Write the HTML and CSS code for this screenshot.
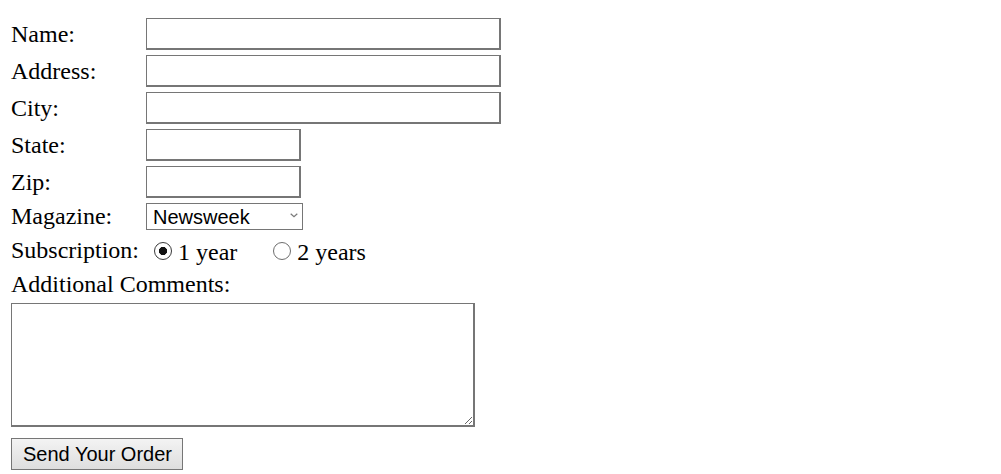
FILE: index.html
```html
<!DOCTYPE html>
<html>
<head>
<meta charset="utf-8">
<link rel="stylesheet" href="styles.css">
</head>
<body>
<form class="order">
  <div class="row"><span class="label">Name:</span><input class="text long" type="text"></div>
  <div class="row"><span class="label">Address:</span><input class="text long" type="text"></div>
  <div class="row"><span class="label">City:</span><input class="text long" type="text"></div>
  <div class="row"><span class="label">State:</span><input class="text short" type="text"></div>
  <div class="row"><span class="label">Zip:</span><input class="text short" type="text"></div>
  <div class="row row-select"><span class="label">Magazine:</span>
    <div class="select-wrap">
      <select class="mag"><option>Newsweek</option><option>Time</option></select>
      <svg class="chev" width="8" height="5" viewBox="0 0 8 5"><path d="M0.7 0.7 L4 3.8 L7.3 0.7" fill="none" stroke="#7a7a7a" stroke-width="1.2"/></svg>
    </div>
  </div>
  <div class="row row-radio"><span class="label">Subscription:</span>
    <div class="options">
      <label class="opt"><input class="radio" type="radio" name="sub" checked><span>1 year</span></label>
      <label class="opt"><input class="radio" type="radio" name="sub"><span>2 years</span></label>
    </div>
  </div>
  <div class="comments-label">Additional Comments:</div>
  <textarea class="comments"></textarea>
  <button class="send" type="button">Send Your Order</button>
</form>
</body>
</html>
```

FILE: styles.css
```css
html, body {
  margin: 0;
  padding: 0;
  background: #ffffff;
}

.order {
  display: flex;
  flex-direction: column;
  align-items: flex-start;
  padding: 18px 0 0 11px;
  font-family: "Liberation Serif", "Times New Roman", serif;
  font-size: 24px;
  color: #000;
}

.row {
  display: flex;
  align-items: center;
  height: 32px;
  margin-bottom: 5px;
}

.label {
  width: 135px;
  flex: none;
}

.text {
  box-sizing: border-box;
  height: 32px;
  margin: 0;
  padding: 0 3px;
  border-style: solid;
  border-color: #767676;
  border-width: 1px 2px 2px 1px;
  background: #fff;
  font-family: "Liberation Sans", Arial, sans-serif;
  font-size: 20px;
  outline: none;
}

.long { width: 355px; }
.short { width: 155px; }

.row-select {
  height: 27px;
  margin-bottom: 3px;
}

.select-wrap {
  position: relative;
  display: flex;
}

.mag {
  appearance: none;
  -webkit-appearance: none;
  box-sizing: border-box;
  width: 157px;
  height: 27px;
  margin: 0;
  padding: 0 20px 0 6px;
  border: 1px solid #767676;
  border-radius: 0;
  background: #fff;
  color: #000;
  font-family: "Liberation Sans", Arial, sans-serif;
  font-size: 20px;
}

.chev {
  position: absolute;
  left: 144px;
  top: 10px;
  pointer-events: none;
}

.row-radio {
  height: 35px;
  margin-bottom: 0;
}

.options {
  display: flex;
  align-items: center;
  padding-top: 3px;
}

.opt {
  display: flex;
  align-items: center;
  margin-left: 8px;
  margin-right: 36px;
}

.opt + .opt {
  margin-left: 0;
}

.radio {
  appearance: none;
  -webkit-appearance: none;
  box-sizing: border-box;
  width: 18px;
  height: 18px;
  margin: 0 6px 2px 0;
  border: 1.5px solid #6e6e6e;
  border-radius: 50%;
  background: #fff;
}

.radio:checked {
  border-color: #3a3a3a;
  background: radial-gradient(circle, #111 0 3.8px, #fff 4.4px);
}

.comments-label {
  height: 27px;
  line-height: 27px;
  margin-top: 3px;
}

.comments {
  box-sizing: border-box;
  width: 464px;
  height: 124px;
  margin: 5px 0 0 0;
  border-style: solid;
  border-color: #767676;
  border-width: 1px 2px 2px 1px;
  padding: 3px;
  font-family: "Liberation Mono", monospace;
  font-size: 20px;
}

.send {
  box-sizing: border-box;
  height: 32px;
  margin-top: 11px;
  padding: 0 10px 0 11px;
  border: 1px solid #767676;
  border-radius: 0;
  background: linear-gradient(#f3f3f3, #dedede);
  color: #000;
  font-family: "Liberation Sans", Arial, sans-serif;
  font-size: 20px;
}
```
